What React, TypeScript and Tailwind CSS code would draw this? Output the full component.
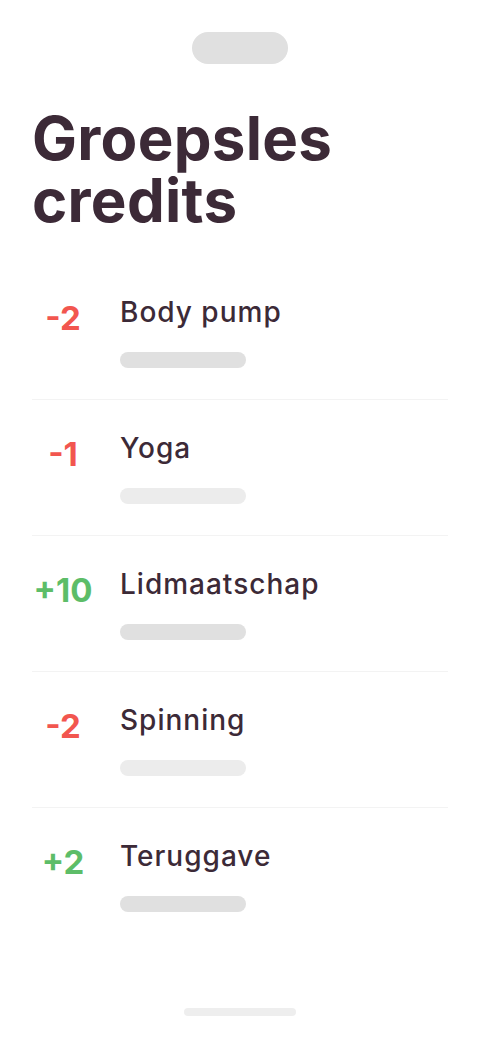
import React from "react";

type Entry = {
  amount: string;
  label: string;
  positive: boolean;
  barTone: string;
};

const entries: Entry[] = [
  { amount: "-2", label: "Body pump", positive: false, barTone: "bg-[#e0e0e0]" },
  { amount: "-1", label: "Yoga", positive: false, barTone: "bg-[#ececec]" },
  { amount: "+10", label: "Lidmaatschap", positive: true, barTone: "bg-[#e0e0e0]" },
  { amount: "-2", label: "Spinning", positive: false, barTone: "bg-[#ececec]" },
  { amount: "+2", label: "Teruggave", positive: true, barTone: "bg-[#e0e0e0]" },
];

function CreditRow({ entry, last }: { entry: Entry; last: boolean }) {
  return (
    <li
      className={`flex items-start pt-[30px] pb-[31px] ${
        last ? "" : "border-b border-[#f3f3f3]"
      }`}
    >
      {/* Amount */}
      <div
        className={`w-[62px] shrink-0 text-center text-[33px] font-bold leading-9 mt-[6px] ${
          entry.positive ? "text-[#5dbd68]" : "text-[#f2564f]"
        }`}
      >
        {entry.amount}
      </div>

      {/* Label + placeholder */}
      <div className="ml-[26px] flex flex-col">
        <span className="text-[28px] font-medium leading-9 tracking-[1px] text-[#3c2a37]">
          {entry.label}
        </span>
        <div className={`mt-[22px] h-4 w-[126px] rounded-full ${entry.barTone}`} />
      </div>
    </li>
  );
}

export default function App() {
  return (
    <div
      className="h-[1040px] w-full bg-white flex flex-col"
      style={{ fontFamily: "Inter, 'Noto Sans', sans-serif" }}
    >
      {/* Top notch */}
      <div className="pt-8 flex justify-center">
        <div className="h-8 w-24 rounded-full bg-[#e0e0e0]" />
      </div>

      {/* Title */}
      <h1 className="mt-[43px] px-8 text-[60px] font-bold leading-[62px] tracking-[0.3px] text-[#3c2a37]">
        Groepsles
        <br />
        credits
      </h1>

      {/* Credit list */}
      <ul className="mt-[33px] mx-8">
        {entries.map((entry, i) => (
          <CreditRow key={i} entry={entry} last={i === entries.length - 1} />
        ))}
      </ul>

      {/* Home indicator */}
      <div className="mt-auto mb-6 flex justify-center">
        <div className="h-2 w-28 rounded-full bg-[#eeeeee]" />
      </div>
    </div>
  );
}
